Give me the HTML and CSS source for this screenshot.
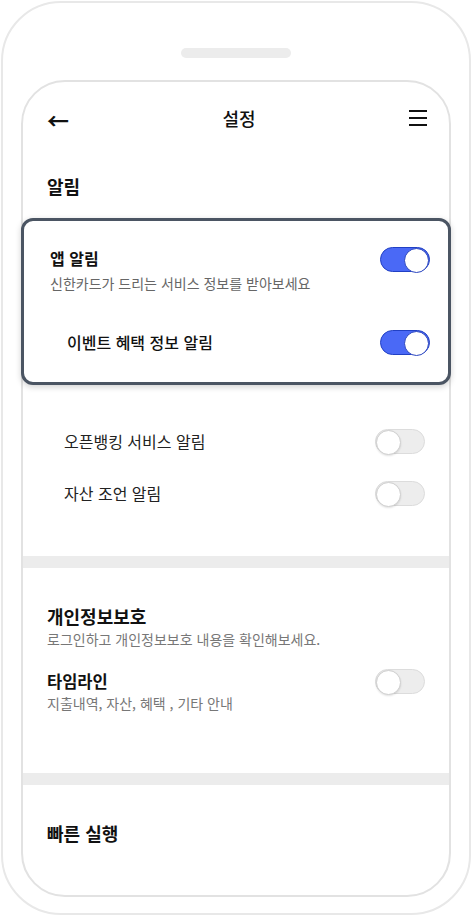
FILE: index.html
```html
<!DOCTYPE html>
<html lang="ko">
<head>
    <meta charset="UTF-8">
    <meta name="viewport" content="width=device-width, initial-scale=1.0">
    <title>설정</title>
    <link rel="stylesheet" href="styles.css">
</head>
<body>
    <div class="phone">
        <div class="speaker"></div>

        <div class="screen">
            <header class="top-bar">
                <span class="back">&larr;</span>
                <h1 class="title">설정</h1>
                <span class="menu"><i></i><i></i><i></i></span>
            </header>

            <h2 class="section-title first">알림</h2>

            <div class="card">
                <div class="row top">
                    <div class="text">
                        <div class="label strong">앱 알림</div>
                        <div class="desc">신한카드가 드리는 서비스 정보를 받아보세요</div>
                    </div>
                    <span class="toggle on"></span>
                </div>
                <div class="row sub-row">
                    <div class="label medium">이벤트 혜택 정보 알림</div>
                    <span class="toggle on"></span>
                </div>
            </div>

            <div class="plain-list">
                <div class="row">
                    <div class="label">오픈뱅킹 서비스 알림</div>
                    <span class="toggle"></span>
                </div>
                <div class="row">
                    <div class="label">자산 조언 알림</div>
                    <span class="toggle"></span>
                </div>
            </div>

            <div class="band"></div>

            <section class="block">
                <h2 class="section-title">개인정보보호</h2>
                <div class="desc light">로그인하고 개인정보보호 내용을 확인해보세요.</div>

                <div class="row top timeline">
                    <div class="text">
                        <div class="label strong big">타임라인</div>
                        <div class="desc light tight">지출내역, 자산, 혜택 , 기타 안내</div>
                    </div>
                    <span class="toggle"></span>
                </div>
            </section>

            <div class="band second"></div>

            <section class="block">
                <h2 class="section-title">빠른 실행</h2>
            </section>
        </div>
    </div>
</body>
</html>
```

FILE: styles.css
```css
* {
    box-sizing: border-box;
}
body {
    margin: 0;
    background: #fff;
    font-family: "Noto Sans CJK KR", "Noto Sans", sans-serif;
    color: #111;
}
.phone {
    margin: 1px;
    height: 914px;
    border: 2px solid #e8e8e8;
    border-radius: 60px;
    display: flex;
    flex-direction: column;
    align-items: center;
}
.speaker {
    width: 110px;
    height: 10px;
    margin-top: 45px;
    border-radius: 5px;
    background: #ececec;
}
.screen {
    width: 430px;
    height: 817px;
    margin-top: 22px;
    border: 2px solid #e2e2e2;
    border-radius: 44px;
}

/* header */
.top-bar {
    height: 72px;
    display: flex;
    align-items: center;
    justify-content: space-between;
    padding: 0 22px 0 24px;
}
.back {
    font-size: 22px;
    line-height: 22px;
    font-weight: 700;
    margin-top: 2px;
}
.title {
    margin: 0;
    font-size: 18px;
    font-weight: 500;
}
.menu {
    width: 18px;
    display: flex;
    flex-direction: column;
    gap: 5px;
}
.menu i {
    display: block;
    height: 2px;
    background: #111;
}

.section-title {
    margin: 0;
    font-size: 18px;
    font-weight: 700;
    line-height: 24px;
}
.section-title.first {
    padding: 20px 24px 0;
    margin-bottom: 20px;
}

/* rows */
.row {
    display: flex;
    align-items: center;
    justify-content: space-between;
}
.row.top {
    align-items: flex-start;
}
.label {
    font-size: 16px;
    line-height: 25px;
    color: #222;
}
.label.strong {
    font-weight: 700;
    color: #111;
    line-height: 22px;
}
.label.medium {
    font-weight: 500;
    color: #111;
}
.label.big {
    font-size: 16.5px;
    line-height: 24px;
}
.desc {
    font-size: 14px;
    line-height: 20px;
    color: #666;
    margin-top: 4px;
}
.desc.light {
    color: #777;
    margin-top: 1px;
}
.desc.tight {
    margin-top: 0;
}

/* highlighted card */
.card {
    margin: 0 -2px;
    padding: 26px 18px 27px 26px;
    border: 3px solid #4b5563;
    border-radius: 12px;
    background: #fff;
    box-shadow: 0 2px 6px rgba(0, 0, 0, 0.18);
}
.card .sub-row {
    margin-top: 37px;
    padding-left: 17px;
}

.plain-list {
    padding: 44px 24px 50px 41px;
    display: flex;
    flex-direction: column;
    gap: 27px;
}

.band {
    height: 12px;
    background: #ececec;
}

.block {
    padding: 36px 24px 0;
}
.timeline {
    margin-top: 20px;
    padding-bottom: 60px;
}

/* switches */
.toggle {
    position: relative;
    flex: none;
    width: 50px;
    height: 25px;
    border-radius: 13px;
    background: #ededed;
    border: 1px solid #dcdcdc;
}
.toggle::after {
    content: "";
    position: absolute;
    top: 0;
    left: 0;
    width: 23px;
    height: 23px;
    border-radius: 50%;
    background: #fff;
    border: 1px solid #cfcfcf;
    box-shadow: 0 1px 2px rgba(0, 0, 0, 0.12);
}
.toggle.on {
    background: #4a69f6;
    border-color: #2140c4;
}
.toggle.on::after {
    left: auto;
    right: 0;
    width: 23px;
    border-color: #2a45c0;
    box-shadow: none;
}
```
